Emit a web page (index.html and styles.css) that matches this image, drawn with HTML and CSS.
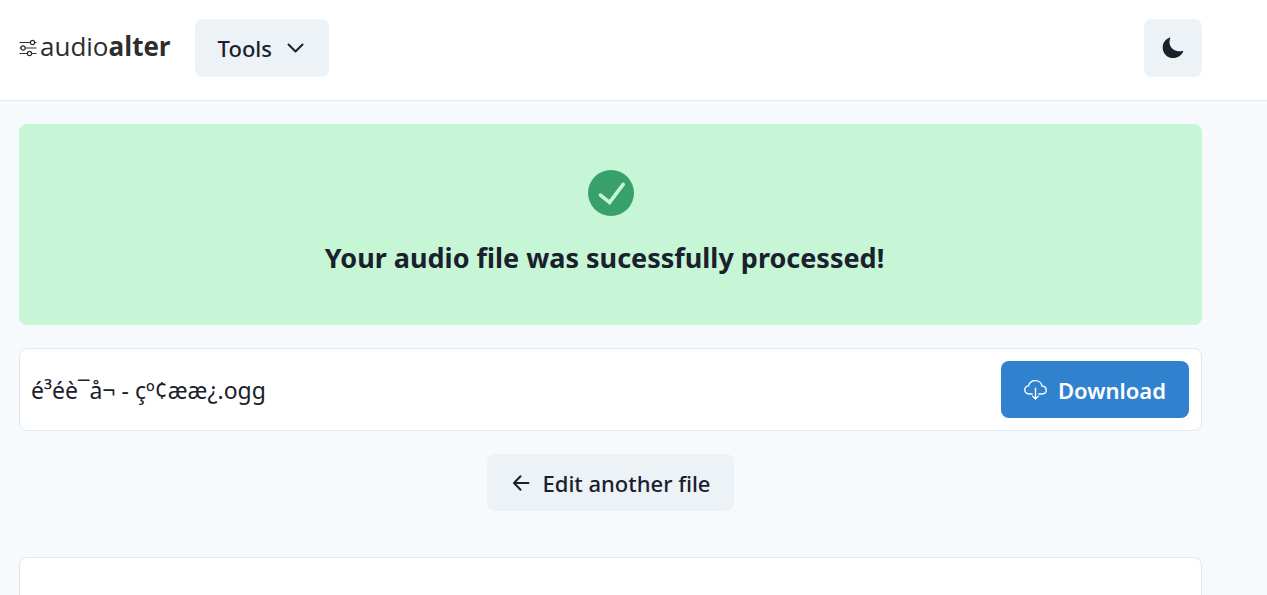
FILE: index.html
```html
<!DOCTYPE html>
<html lang="en">
<head>
<meta charset="utf-8">
<meta name="viewport" content="width=device-width, initial-scale=1">
<title>Audioalter</title>
<link rel="stylesheet" href="styles.css">
</head>
<body>
<header class="site-header">
  <a class="logo" href="#" aria-label="audioalter">
    <svg class="logo-mark" viewBox="0 0 18 18" fill="none" stroke="currentColor" stroke-width="1.2" aria-hidden="true">
      <path d="M0.5 3.5h10.8M15.7 3.5h1.8M0.5 9h1.4M6.3 9h11.2M0.5 14.5h7.8M12.7 14.5h4.8"/>
      <circle cx="13.5" cy="3.5" r="2.1"/><circle cx="4.1" cy="9" r="2.1"/><circle cx="10.5" cy="14.5" r="2.1"/>
    </svg>
    <span class="logo-text">audio<b>alter</b></span>
  </a>
  <button class="btn btn-tools" type="button">Tools
    <svg class="icon" viewBox="0 0 20 20" fill="none" stroke="currentColor" stroke-width="2" stroke-linecap="round" stroke-linejoin="round" aria-hidden="true"><path d="M2.500 6.500l7 7 7-7"/></svg>
  </button>
  <button class="btn btn-theme" type="button" aria-label="Switch to dark mode">
    <svg class="icon-moon" viewBox="0 0 22 22" fill="currentColor" aria-hidden="true"><path d="M7.9 0.5C3.7 1.9 0.7 5.8 0.7 10.4C0.7 16.4 5.3 21.1 11.3 21.1C15.7 21.1 19.5 18.4 21.2 14.5C21.3 14 21 13.7 20.5 13.9C18.8 14.4 17 14.5 15 14C10.300 12.900 7.300 9 7.500 4.500C7.600 3.200 7.900 2.100 8.400 1.100C8.600 0.700 8.300 0.400 7.900 0.500Z"/></svg>
  </button>
</header>
<main class="content">
  <section class="notice">
    <svg class="icon-check" viewBox="0 0 46 46" fill="none" aria-hidden="true"><circle cx="23" cy="23" r="23" fill="#38a169"/><path d="M12.400 25.200l9.200 7.200L35.200 14.300" stroke="#c6f6d5" stroke-width="3.600" stroke-linecap="round" stroke-linejoin="miter"/></svg>
    <h1 class="notice-title">Your audio file was sucessfully processed!</h1>
  </section>
  <section class="card file-row">
    <span class="file-name">é³éè¯å¬ - çº¢ææ¿.ogg</span>
    <button class="btn btn-primary" type="button">
      <svg class="icon-cloud" viewBox="0 0 24 24" fill="none" stroke="currentColor" stroke-width="1.400" stroke-linecap="round" stroke-linejoin="round" aria-hidden="true"><path d="M8.500 16.700H5.400C2.700 16.700 0.800 14.900 0.800 12.500C0.800 10.200 2.500 8.400 4.800 8.200C5.500 4.900 8.300 2.700 11.900 2.700C15.600 2.700 18.400 5.200 18.800 8.500C21.300 8.600 23.200 10.300 23.200 12.600C23.200 15 21.300 16.700 18.700 16.700H15.500M12 10.500v11.300M8.900 18.900l3.100 3.100 3.100-3.100"/></svg>
      Download</button>
  </section>
  <button class="btn btn-back" type="button">
    <svg class="icon" viewBox="0 0 20 20" fill="none" stroke="currentColor" stroke-width="2" stroke-linecap="round" stroke-linejoin="round" aria-hidden="true"><path d="M18.500 10H4M10.500 3.300L4 10l6.500 6.700"/></svg>
    Edit another file</button>
  <section class="card next-card"></section>
</main>
</body>
</html>
```
FILE: styles.css
```css
* {
  box-sizing: border-box;
}

body {
  display: flex;
  flex-direction: column;
  min-height: 100vh;
  margin: 0;
  background: #f6fafd;
  color: #1a202c;
  font-family: "Segoe UI", "Noto Sans", "Open Sans", sans-serif;
  font-size: 23px;
  line-height: 36px;
}

.site-header {
  display: flex;
  align-items: center;
  padding: 19px 65px 23px 19px;
  background: #fff;
  border-bottom: 1px solid #e2e8f0;
}

.logo {
  display: flex;
  align-items: center;
  gap: 3px;
  margin-right: 24px;
  color: #2d2d2d;
  text-decoration: none;
}

.logo-mark {
  width: 18px;
  height: 18px;
}

.logo-text {
  padding-bottom: 4px;
  font-family: "Open Sans", sans-serif;
  font-size: 26px;
  font-weight: 400;
}

.logo-text b {
  font-weight: 700;
}

.btn {
  display: flex;
  align-items: center;
  justify-content: center;
  height: 57px;
  padding: 0 23px;
  border: 0;
  border-radius: 8px;
  background: #edf2f7;
  color: inherit;
  font: inherit;
  font-size: 22px;
  font-weight: 500;
  white-space: nowrap;
  cursor: pointer;
}

.icon {
  width: 20px;
  height: 20px;
}

.btn-tools {
  gap: 14px;
}

.site-header .btn {
  height: 58px;
}

.btn-theme {
  width: 58px;
  margin-left: auto;
  padding: 0;
}

.icon-moon {
  width: 22px;
  height: 22px;
}

.content {
  display: flex;
  flex: 1;
  flex-direction: column;
  padding: 23px 65px 0 19px;
}

.notice {
  display: flex;
  flex-direction: column;
  align-items: center;
  gap: 23px;
  margin-bottom: 23px;
  padding: 46px 24px 48px;
  border-radius: 8px;
  background: #c6f6d5;
}

.icon-check {
  width: 46px;
  height: 46px;
}

.notice-title {
  margin: 0;
  padding-right: 12px;
  font-size: 27px;
  font-weight: 700;
  line-height: 38px;
}

.card {
  border: 1px solid #e2e8f0;
  border-radius: 8px;
  background: #fff;
}

.file-row {
  display: flex;
  align-items: center;
  justify-content: space-between;
  margin-bottom: 23px;
  padding: 12px 12px 12px 11px;
}

.btn-primary {
  gap: 11px;
  background: #3182ce;
  color: #fff;
  font-weight: 600;
}

.icon-cloud {
  width: 23px;
  height: 23px;
}

.btn-back {
  align-self: center;
  gap: 12px;
  margin-bottom: 46px;
}

.next-card {
  flex: 1;
  border-bottom: 0;
  border-radius: 8px 8px 0 0;
}
```
